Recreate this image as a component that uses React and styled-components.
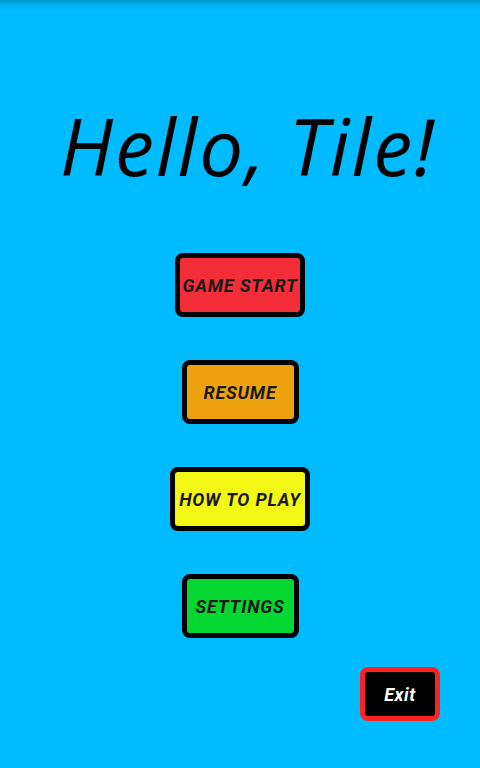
import React from 'react';
import styled, { createGlobalStyle } from 'styled-components';

const GlobalStyle = createGlobalStyle`
  html, body {
    margin: 0;
    padding: 0;
    background: #00bbff;
  }
  * {
    box-sizing: border-box;
  }
`;

const Screen = styled.div`
  width: 480px;
  height: 768px;
  overflow: hidden;
  display: flex;
  flex-direction: column;
  align-items: center;
  background: linear-gradient(to bottom, #0399cf 0px, #00b4f6 6px, #00bbff 12px);
  font-family: 'Open Sans', 'DejaVu Sans', sans-serif;
`;

const Title = styled.h1`
  margin: 96px 0 0 16px;
  font-size: 78px;
  line-height: 100px;
  font-weight: 400;
  font-style: italic;
  color: #000000;
  letter-spacing: 2px;
`;

const Menu = styled.div`
  display: flex;
  flex-direction: column;
  align-items: center;
  gap: 43px;
  margin-top: 57px;
`;

const MenuButton = styled.button`
  width: ${p => p.$w}px;
  height: 64px;
  background: ${p => p.$bg};
  border: 5px solid #000000;
  border-radius: 8px;
  padding: 0;
  display: flex;
  align-items: center;
  justify-content: center;
  overflow: hidden;
  white-space: nowrap;
  font-family: Roboto, 'Open Sans', sans-serif;
  font-size: 18px;
  font-weight: 700;
  font-style: italic;
  letter-spacing: 0.8px;
  color: #1a1a1a;
  cursor: pointer;
`;

const Footer = styled.div`
  width: 100%;
  display: flex;
  justify-content: flex-end;
  padding-right: 40px;
  margin-top: 29px;
`;

const ExitButton = styled.button`
  width: 80px;
  height: 54px;
  background: #000000;
  border: 5px solid #ff2020;
  border-radius: 8px;
  color: #ffffff;
  font-family: Roboto, 'Open Sans', sans-serif;
  font-size: 18px;
  font-weight: 700;
  font-style: italic;
  letter-spacing: 0.6px;
  cursor: pointer;
`;

const items = [
  { label: 'GAME START', bg: '#f32e38', w: 130 },
  { label: 'RESUME', bg: '#eea30e', w: 117 },
  { label: 'HOW TO PLAY', bg: '#f3f714', w: 140 },
  { label: 'SETTINGS', bg: '#04d730', w: 117 },
];

export default function App() {
  return (
    <>
      <GlobalStyle />
      <Screen>
        <Title>Hello, Tile!</Title>
        <Menu>
          {items.map(item => (
            <MenuButton key={item.label} $bg={item.bg} $w={item.w}>
              {item.label}
            </MenuButton>
          ))}
        </Menu>
        <Footer>
          <ExitButton>Exit</ExitButton>
        </Footer>
      </Screen>
    </>
  );
}
